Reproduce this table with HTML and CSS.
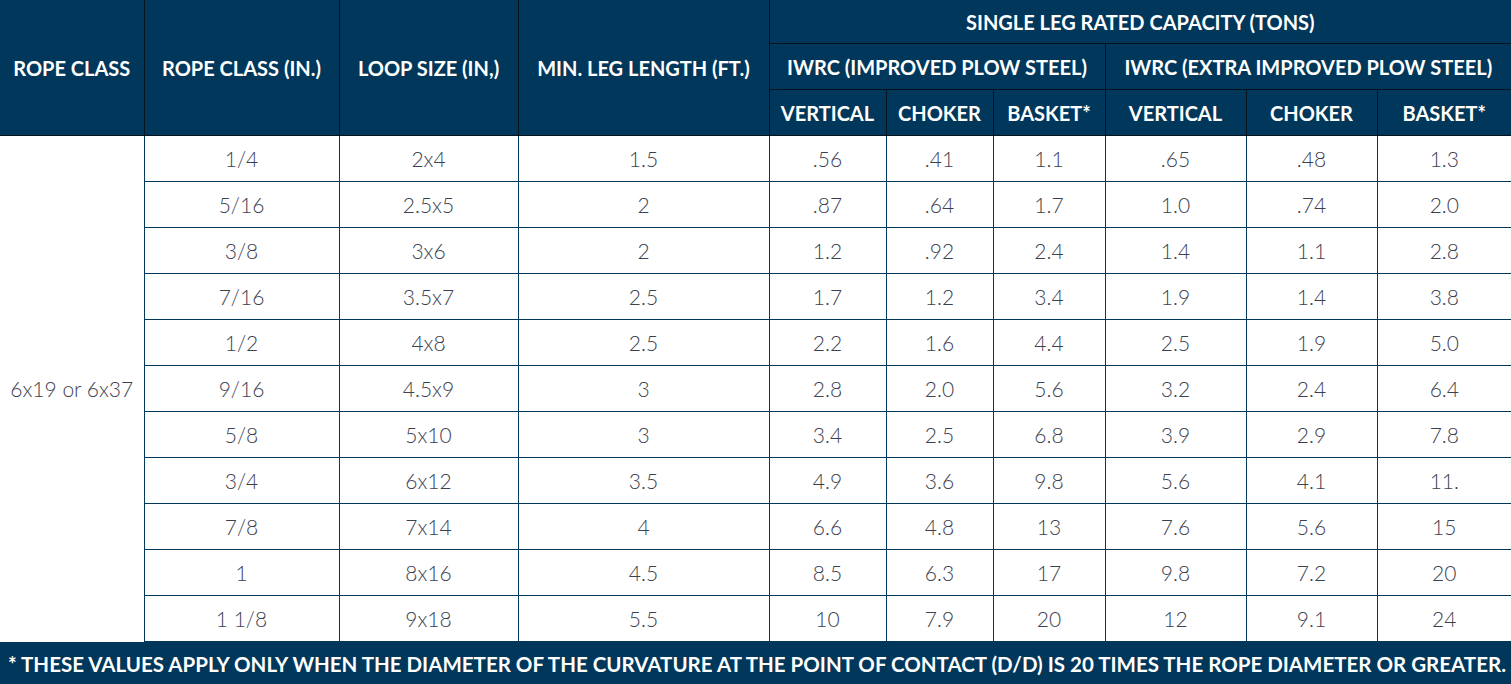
FILE: index.html
```html
<!DOCTYPE html>
<html>
<head>
<meta charset="utf-8">
<link rel="stylesheet" href="styles.css">
</head>
<body>
<table class="spec">
  <colgroup>
    <col class="c1"><col class="c2"><col class="c3"><col class="c4">
    <col class="c5"><col class="c6"><col class="c7"><col class="c8"><col class="c9"><col class="c10">
  </colgroup>
  <thead>
    <tr class="h1">
      <th rowspan="3">ROPE CLASS</th>
      <th rowspan="3">ROPE CLASS (IN.)</th>
      <th rowspan="3">LOOP SIZE (IN,)</th>
      <th rowspan="3">MIN. LEG LENGTH (FT.)</th>
      <th colspan="6">SINGLE LEG RATED CAPACITY (TONS)</th>
    </tr>
    <tr class="h2">
      <th colspan="3">IWRC (IMPROVED PLOW STEEL)</th>
      <th colspan="3">IWRC (EXTRA IMPROVED PLOW STEEL)</th>
    </tr>
    <tr class="h3">
      <th>VERTICAL</th><th>CHOKER</th><th>BASKET*</th>
      <th>VERTICAL</th><th>CHOKER</th><th>BASKET*</th>
    </tr>
  </thead>
  <tbody>
    <tr><td class="rc" rowspan="11">6x19 or 6x37</td><td>1/4</td><td>2x4</td><td>1.5</td><td>.56</td><td>.41</td><td>1.1</td><td>.65</td><td>.48</td><td>1.3</td></tr>
    <tr><td>5/16</td><td>2.5x5</td><td>2</td><td>.87</td><td>.64</td><td>1.7</td><td>1.0</td><td>.74</td><td>2.0</td></tr>
    <tr><td>3/8</td><td>3x6</td><td>2</td><td>1.2</td><td>.92</td><td>2.4</td><td>1.4</td><td>1.1</td><td>2.8</td></tr>
    <tr><td>7/16</td><td>3.5x7</td><td>2.5</td><td>1.7</td><td>1.2</td><td>3.4</td><td>1.9</td><td>1.4</td><td>3.8</td></tr>
    <tr><td>1/2</td><td>4x8</td><td>2.5</td><td>2.2</td><td>1.6</td><td>4.4</td><td>2.5</td><td>1.9</td><td>5.0</td></tr>
    <tr><td>9/16</td><td>4.5x9</td><td>3</td><td>2.8</td><td>2.0</td><td>5.6</td><td>3.2</td><td>2.4</td><td>6.4</td></tr>
    <tr><td>5/8</td><td>5x10</td><td>3</td><td>3.4</td><td>2.5</td><td>6.8</td><td>3.9</td><td>2.9</td><td>7.8</td></tr>
    <tr><td>3/4</td><td>6x12</td><td>3.5</td><td>4.9</td><td>3.6</td><td>9.8</td><td>5.6</td><td>4.1</td><td>11.</td></tr>
    <tr><td>7/8</td><td>7x14</td><td>4</td><td>6.6</td><td>4.8</td><td>13</td><td>7.6</td><td>5.6</td><td>15</td></tr>
    <tr><td>1</td><td>8x16</td><td>4.5</td><td>8.5</td><td>6.3</td><td>17</td><td>9.8</td><td>7.2</td><td>20</td></tr>
    <tr><td>1 1/8</td><td>9x18</td><td>5.5</td><td>10</td><td>7.9</td><td>20</td><td>12</td><td>9.1</td><td>24</td></tr>
  </tbody>
  <tfoot>
    <tr><td colspan="10">* THESE VALUES APPLY ONLY WHEN THE DIAMETER OF THE CURVATURE AT THE POINT OF CONTACT (D/D) IS 20 TIMES THE ROPE DIAMETER OR GREATER.</td></tr>
  </tfoot>
</table>
</body>
</html>
```
FILE: styles.css
```css
html, body {
  margin: 0;
  padding: 0;
  background: #ffffff;
}
.spec {
  width: 1511px;
  table-layout: fixed;
  border-collapse: collapse;
  font-family: "Lato", "Noto Sans", sans-serif;
}
.c1 { width: 144px; }
.c2 { width: 195px; }
.c3 { width: 179px; }
.c4 { width: 251px; }
.c5 { width: 117px; }
.c6 { width: 107px; }
.c7 { width: 112px; }
.c8 { width: 141px; }
.c9 { width: 131px; }
.c10 { width: 134px; }

.spec th {
  background: #00375a;
  color: #ffffff;
  font-weight: 700;
  font-size: 20px;
  padding: 0;
  border: 1px solid #06121c;
  white-space: nowrap;
  height: 45px;
}
.spec thead tr.h1 th { border-top: none; height: 43px; }
.spec thead tr.h1 th:first-child { border-left: none; }
.spec thead th:last-child { border-right: none; }

.spec td {
  color: #3c4150;
  font-size: 21px;
  font-weight: 300;
  text-align: center;
  padding: 0;
  height: 45px;
  border: 1px solid #00375a;
}
.spec tbody td:last-child { border-right: none; }
.spec td.rc {
  border-left: none;
  border-bottom: none;
}
.spec tfoot td {
  background: #00375a;
  color: #ffffff;
  font-weight: 700;
  font-size: 20.5px;
  text-align: left;
  padding: 0 0 0 8px;
  height: 43px;
  border: none;
  white-space: nowrap;
}
```
